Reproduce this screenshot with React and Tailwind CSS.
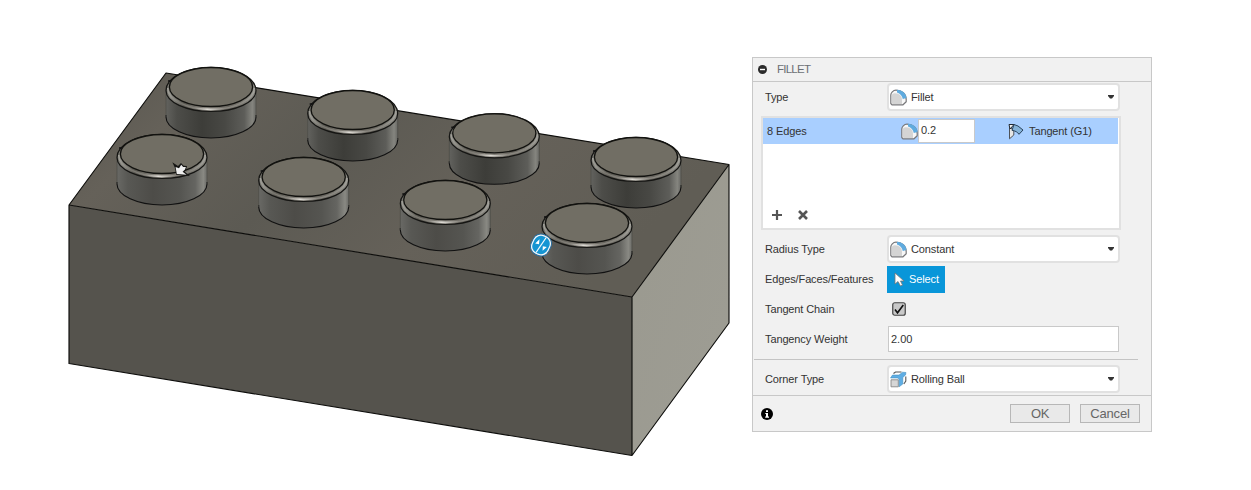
const studs = [
  [211, 87, 'back'], [352.7, 110, 'back'], [494.3, 133.3, 'back'], [636, 157, 'back'],
  [162, 154, 'front'], [303.7, 177, 'front'], [445.3, 200, 'front'], [587, 223, 'front'],
];

function Stud({ x, y, row }) {
  const t = y + 3.5;
  const b = y + 30;
  return (
    <g>
      <path d={`M${x - 45} ${t}V${b}A45 21 0 0 0 ${x + 45} ${b}V${t}Z`} fill={`url(#${row})`} />
      <path d={`M${x - 45} ${b - 2}V${b}A45 21 0 0 0 ${x + 45} ${b}V${b - 2}`} fill="none" stroke="#111" strokeWidth="1.1" />
      <path d={`M${x - 45} ${t}V${b}M${x + 45} ${t}V${b}`} stroke="#4b4a45" strokeWidth=".7" />
      <path d={`M${x - 45} ${t}A45 23.2 0 0 1 ${x + 45} ${t}A45 21 0 0 1 ${x - 45} ${t}Z`} fill="url(#rim)" stroke="#151513" strokeWidth="1.2" />
      <path d={`M${x - 43.3} ${y + 1}A43.3 21.4 0 0 0 ${x + 43.3} ${y + 1}`} fill="none" stroke="url(#shine)" strokeWidth="1.6" />
      <ellipse cx={x} cy={y} rx="41.6" ry="19.5" fill="#716e64" stroke="#12120f" strokeWidth="1.3" />
      <path d={`M${x - 43} ${y - 6}h3`} stroke="#111" strokeWidth="1.5" />
    </g>
  );
}

function Model() {
  return (
    <svg className="block h-[490px] w-[752px] shrink-0" viewBox="0 0 752 490">
      <defs>
        <linearGradient id="top" x1="0" y1="0" x2="1" y2=".35">
          <stop offset="0" stopColor="#57554e" /><stop offset=".2" stopColor="#656159" />
          <stop offset=".45" stopColor="#5c5a53" /><stop offset=".7" stopColor="#656159" /><stop offset="1" stopColor="#605d55" />
        </linearGradient>
        <linearGradient id="side" x1="0" y1="0" x2="1" y2="1">
          <stop offset="0" stopColor="#9a998f" /><stop offset="1" stopColor="#9e9d94" />
        </linearGradient>
        <linearGradient id="back">
          <stop offset="0" stopColor="#62625e" /><stop offset=".12" stopColor="#4d4d49" /><stop offset=".4" stopColor="#3d3d39" />
          <stop offset=".65" stopColor="#484844" /><stop offset=".87" stopColor="#5d5d59" /><stop offset=".96" stopColor="#85857f" /><stop offset="1" stopColor="#686864" />
        </linearGradient>
        <linearGradient id="front">
          <stop offset="0" stopColor="#696965" /><stop offset=".12" stopColor="#585854" /><stop offset=".4" stopColor="#4d4c48" />
          <stop offset=".7" stopColor="#555551" /><stop offset=".87" stopColor="#656561" /><stop offset=".96" stopColor="#898983" /><stop offset="1" stopColor="#6b6b67" />
        </linearGradient>
        <linearGradient id="rim">
          <stop offset="0" stopColor="#64635d" /><stop offset=".05" stopColor="#8b8a83" /><stop offset=".2" stopColor="#5b5952" />
          <stop offset=".45" stopColor="#8a8780" /><stop offset=".7" stopColor="#68655e" /><stop offset="1" stopColor="#8d8c85" />
        </linearGradient>
        <linearGradient id="shine">
          <stop offset="0" stopColor="#a09f98" /><stop offset=".15" stopColor="#77756e" /><stop offset=".3" stopColor="#85827b" />
          <stop offset=".46" stopColor="#dedbd5" /><stop offset=".65" stopColor="#88857e" /><stop offset=".85" stopColor="#898780" /><stop offset="1" stopColor="#a2a19b" />
        </linearGradient>
      </defs>
      <path d="M166 73L729 164.5L632 297L69 205Z" fill="url(#top)" />
      <path d="M69 205L632 297V455.5L69 363.5Z" fill="#55534d" />
      <path d="M632 297L729 164.5V323L632 455.5Z" fill="url(#side)" />
      <path d="M69 205L166 73L729 164.5L632 297ZV363.5L632 455.5V297M632 455.5L729 323V164.5" fill="none" stroke="#0d0d0b" strokeWidth="1.15" strokeLinejoin="round" />
      {studs.map(([x, y, row]) => <Stud key={x} x={x} y={y} row={row} />)}
      <path d="M172.3 162.3L178 166L181 163L183.7 165.8L187 166L185.9 170L184.5 171.5L190 176L176.2 174.8L175 168Z" fill="#161614" />
      <path d="M175.6 167L179 168.3L181.2 164.8L183.2 167L185.9 167L185 169.6L182.6 171.8L186.5 174.8L176.8 174Z" fill="#ededed" />
      <g>
        <rect x="531.3" y="234.3" width="19.4" height="21.4" rx="8.5" transform="rotate(25 541 245)" fill="#f3f6f8" stroke="#2a6d9d" strokeWidth="1" />
        <rect x="533" y="236" width="16" height="18" rx="7" transform="rotate(25 541 245)" fill="#1595d3" />
        <path d="M536 252.5L546.2 237.5" stroke="#f3f9fc" strokeWidth="1.3" />
        <path d="M539.5 239.2L535.2 243.5L539 244.3ZM542.8 246.2L546.8 247L542.6 250.8Z" fill="#fff" />
      </g>
    </svg>
  );
}

function FilletIcon() {
  return (
    <svg className="size-[17px] shrink-0" viewBox="0 0 17 17">
      <path d="M.8 6C.8 4 3 1.2 6 1.2C12 1.2 16.2 5 16.2 10.5V12.7L13 15.8H2L.8 14.5Z" fill="#f7f7f7" stroke="#77777a" strokeWidth="1.2" strokeLinejoin="round" />
      <path d="M1.8 6.5C2 5 3.2 4.2 5 4.2C9.5 4.2 12 7.5 12 11V15H2.6L1.8 14Z" fill="#d4d4d4" />
      <path d="M7 .8C12 .8 16.4 4.6 16.4 9L12.8 10C12.2 7 10.2 4.5 7 3.6Z" fill="#5fabdf" />
    </svg>
  );
}

function TangentIcon() {
  return (
    <svg className="h-[17px] w-[16px] shrink-0" viewBox="0 0 16 17">
      <path d="M1.5 4V15.8L5.8 12V7.8L4 6Z" fill="#e6e6e6" stroke="#4d5258" strokeLinejoin="round" />
      <path d="M1 1.5H6L2 6Z" fill="#f3f3f3" stroke="#222a33" />
      <path d="M6 1.5L10 3L15 7L11 11.3C9.5 9 7.5 8 4 7.3Z" fill="#85b3d9" stroke="#29435c" strokeLinejoin="round" />
    </svg>
  );
}

function RollingIcon() {
  return (
    <svg className="size-[17px] shrink-0" viewBox="0 0 17 17">
      <path d="M1 8.8H8.3V15.8H1Z" fill="#d6d6d6" stroke="#888" strokeWidth=".9" />
      <path d="M3.5 2.5L5.5 1H11.5M15.8 5.5V10L13.8 13" fill="none" stroke="#555" strokeWidth="1.1" />
      <path d="M.5 7L2.5 4H9L12.5 1.2L16 1.5L15.5 4L12.8 6.5V13L9.2 15.8V8.8L8 7Z" fill="#5fade3" stroke="#3b88bb" strokeWidth=".5" />
    </svg>
  );
}

function Dropdown({ icon, children }) {
  return (
    <div className="flex h-[28px] w-[233px] items-center rounded-sm border-2 border-[#e1e1e1] bg-white pr-[4px] pl-px">
      {icon}<span className="ml-[4px] grow">{children}</span>
      <svg className="h-[4px] w-[6px]" viewBox="0 0 6 4"><path d="M0 0H6V1L4 3.5H2L0 1Z" fill="#333" /></svg>
    </div>
  );
}

function Row({ label, children }) {
  return <div className="flex h-[30px] items-center pl-[12px]"><span className="w-[122px] shrink-0">{label}</span>{children}</div>;
}

function Panel() {
  return (
    <section className="mt-[57px] flex h-[375px] w-[400px] shrink-0 flex-col border border-[#c8c8c8] bg-[#f1f1f1]">
      <header className="flex h-[24px] shrink-0 items-center border-b border-[#c8c8c8] pl-[5px] text-[#6c7075]">
        <svg className="size-[9px]" viewBox="0 0 9 9"><circle cx="4.5" cy="4.5" r="4.5" fill="#2b2b2b" /><path d="M2 4.5H7" stroke="#fff" strokeWidth="1.4" /></svg>
        <span className="ml-[10px] pb-px text-[11.5px] tracking-[-0.75px]">FILLET</span>
      </header>
      <Row label="Type"><Dropdown icon={<FilletIcon />}>Fillet</Dropdown></Row>
      <div className="mt-[4px] ml-[8px] flex h-[114px] w-[360px] shrink-0 flex-col border-2 border-[#e1e1e1] bg-white pr-px">
        <div className="flex h-[26px] w-full shrink-0 items-center bg-[#a9cfff] pl-[4px]">
          <span className="w-[134px]">8 Edges</span><FilletIcon />
          <div className="flex h-[24px] w-[57px] items-center border border-[#c9c9c9] bg-white pb-[2px] pl-[2px]">0.2</div>
          <span className="w-[33px]" /><TangentIcon /><span className="ml-[5px]">Tangent (G1)</span>
        </div>
        <div className="mt-auto flex h-[27px] items-center gap-[16px] pl-[9px]">
          <svg className="size-[10px]" viewBox="0 0 10 10"><path d="M5 0V10M0 5H10" stroke="#555" strokeWidth="2.2" /></svg>
          <svg className="size-[10px]" viewBox="0 0 10 10"><path d="M1 1L9 9M9 1L1 9" stroke="#555" strokeWidth="2.6" /></svg>
        </div>
      </div>
      <div className="mt-[4px]">
        <Row label="Radius Type"><Dropdown icon={<FilletIcon />}>Constant</Dropdown></Row>
        <Row label="Edges/Faces/Features">
          <button className="flex h-[27px] w-[58px] items-center bg-[#0996d9] pl-[7px] text-white">
            <svg className="h-[15px] w-[11px]" viewBox="0 0 11 15"><path d="M1 1V12L4 9.5L6.5 14L8.5 13L6.5 9H10Z" fill="#fff" stroke="#777" strokeWidth=".8" /></svg>
            <span className="ml-[4px]">Select</span>
          </button>
        </Row>
        <Row label="Tangent Chain">
          <svg className="ml-[5px] size-[14px]" viewBox="0 0 14 14"><rect x=".75" y=".75" width="12.5" height="12.5" rx="2" fill="#c9c9c9" stroke="#444" strokeWidth="1.2" /><path d="M3 7.5L5.5 10.8L11.3 3" fill="none" stroke="#111" strokeWidth="1.6" /></svg>
        </Row>
        <Row label="Tangency Weight"><div className="ml-px flex h-[26px] w-[231px] items-center border border-[#c9c9c9] bg-white pb-px pl-[2px] tracking-normal">2.00</div></Row>
      </div>
      <div className="mt-[5px] ml-px h-px w-[384px] shrink-0 bg-[#c4c4c4]" />
      <div className="mt-[4px]"><Row label="Corner Type"><Dropdown icon={<RollingIcon />}>Rolling Ball</Dropdown></Row></div>
      <footer className="mt-auto flex h-[36px] shrink-0 items-center border-t border-[#c8c8c8] pr-[11px] pl-[8px] text-[13px] text-[#666]">
        <svg className="size-[12px]" viewBox="0 0 12 12"><circle cx="6" cy="6" r="6" fill="#000" /><path d="M5 2.2H7V4H5ZM4.3 5H7V8.5H8V9.7H4.2V8.5H5V6H4.3Z" fill="#fff" /></svg>
        <button className="ml-auto h-[19px] w-[60px] border border-[#b7b7b7] bg-[#e9e9e9] leading-[17px] tracking-[-0.5px]">OK</button>
        <button className="ml-[10px] h-[19px] w-[60px] border border-[#b7b7b7] bg-[#e9e9e9] leading-[17px] tracking-[-0.2px]">Cancel</button>
      </footer>
    </section>
  );
}

export default function App() {
  return (
    <main className="flex h-[490px] w-[1251px] overflow-hidden bg-white font-['Liberation_Sans',Arial,sans-serif] text-[11px] leading-[14px] tracking-[-0.12px] text-[#333]">
      <Model /><Panel />
    </main>
  );
}
